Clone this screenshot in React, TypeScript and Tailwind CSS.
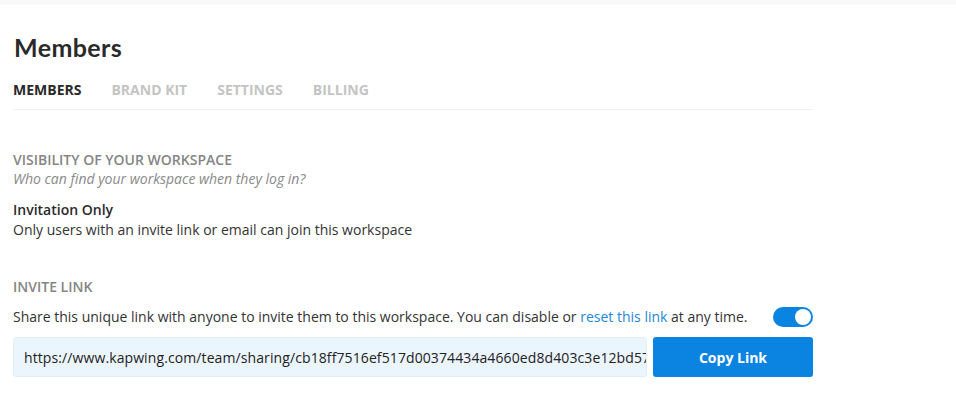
import React from "react";

export default function App() {
  const tabs = ["MEMBERS", "BRAND KIT", "SETTINGS", "BILLING"];
  return (
    <div className="w-[956px] h-[400px] bg-white overflow-hidden" style={{ fontFamily: '"Open Sans", sans-serif' }}>
      <div className="h-[5px] bg-[#f8f8f8]" />
      <div className="w-[800px] ml-[13px]">
        <h1 className="mt-[26px] text-[25px] leading-[32px] font-bold tracking-[0.4px] text-[#2a2a2a] pl-[1px]" style={{ fontFamily: 'Lato, "Open Sans", sans-serif' }}>
          Members
        </h1>
        <div className="mt-[18px] flex gap-[30px] border-b border-[#f1f1f1] pb-[10px]">
          {tabs.map((t, i) => (
            <span
              key={t}
              className={`text-[14px] leading-[18px] font-bold ${i === 0 ? "text-[#2a2a2a]" : "text-[#c4c4c4]"}`}
            >
              {t}
            </span>
          ))}
        </div>
        <div className="mt-[41px] text-[14px] leading-[18px] font-semibold text-[#858585]">VISIBILITY OF YOUR WORKSPACE</div>
        <div className="text-[14px] leading-[20px] italic text-[#8a8a8a]">Who can find your workspace when they log in?</div>
        <div className="mt-[11px] text-[14px] leading-[20px] font-semibold text-[#2a2a2a]">Invitation Only</div>
        <div className="text-[14px] leading-[20px] text-[#333]">Only users with an invite link or email can join this workspace</div>
        <div className="mt-[38px] text-[14px] leading-[18px] font-semibold text-[#858585]">INVITE LINK</div>
        <div className="mt-[11px] flex items-center justify-between">
          <span className="text-[14px] leading-[20px] text-[#333]">
            Share this unique link with anyone to invite them to this workspace. You can disable or{" "}
            <span className="text-[#2486d6]">reset this link</span> at any time.
          </span>
          <div className="w-[40px] h-[20px] rounded-full bg-[#0a84e0] flex items-center justify-end pr-[2px]">
            <div className="w-[16px] h-[16px] rounded-full bg-white" />
          </div>
        </div>
        <div className="mt-[10px] flex gap-[6px]">
          <div className="w-[634px] h-[40px] rounded-[3px] bg-[#ebf5fd] border border-[#e3eef8] flex items-center pl-[10px] overflow-hidden whitespace-nowrap text-[14px] tracking-[0.1px] text-[#222]">
            https://www.kapwing.com/team/sharing/cb18ff7516ef517d00374434a4660ed8d403c3e12bd57
          </div>
          <button className="w-[160px] h-[40px] rounded-[3px] bg-[#0a84e0] text-white text-[14px] font-bold">
            Copy Link
          </button>
        </div>
      </div>
    </div>
  );
}
